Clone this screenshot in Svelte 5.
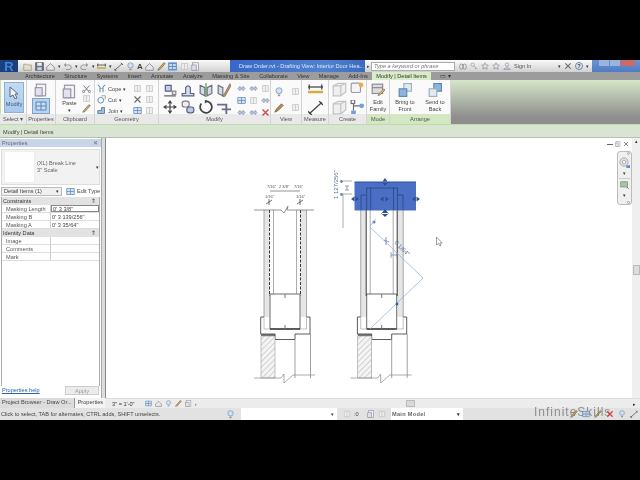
<script>
    const tabs = ["Architecture", "Structure", "Systems", "Insert", "Annotate", "Analyze", "Massing & Site", "Collaborate", "View", "Manage", "Add-Ins"];

    const constraints = [
        ["Masking Length", "0'  3 3/8\"", true],
        ["Masking B", "0'  3 139/256\"", false],
        ["Masking A", "0'  3 35/64\"", false]
    ];

    const identity = ["Image", "Comments", "Mark"];

    // small tool icons, all on a 12x12 box
    const icons = {
        box: `<rect x="1" y="2" width="10" height="8" fill="#c8d4e4" stroke="#667"/>`,
        align: `<path d="M1 11h10M2 2h5v5H2z" fill="#b8cbe4" stroke="#446"/><path d="M8 7h3v3H8z" fill="#ddd" stroke="#777"/>`,
        offset: `<path d="M1 9h3V4q2-3 4 0v5h3v2H1z" fill="#cfdcec" stroke="#446"/>`,
        mirror: `<path d="M1 2l4 2v7l-4-2zM11 2L7 4v7l4-2z" fill="#cdd9e8" stroke="#556"/><path d="M6 0v12" stroke="#2a8a3a"/>`,
        mirror2: `<path d="M1 2l4 2v7l-4-2z" fill="#cdd9e8" stroke="#556"/><path d="M11 1L6 10l-1 2 2-1 5-9z" fill="#e8b83a" stroke="#865"/>`,
        move: `<path d="M6 0l2 3H4zM6 12l2-3H4zM0 6l3-2v4zM12 6L9 4v4z" fill="#222"/><path d="M6 3v6M3 6h6" stroke="#222"/>`,
        copy: `<rect x="1" y="1" width="6" height="5" rx="2" fill="#eee" stroke="#667"/><rect x="5" y="6" width="6" height="5" rx="2" fill="#a9c3e4" stroke="#446"/>`,
        rotate: `<path d="M6 1a5 5 0 1 1-4 2" fill="none" stroke="#222" stroke-width="1.5"/><path d="M5 0l3 1-3 2z" fill="#222"/>`,
        trim: `<path d="M0 4h8v8M4 8h8" fill="none" stroke="#557" stroke-width="1.6"/>`,
        arrows: `<path d="M1 6l3-3v2h4V3l3 3-3 3V7H4v2z" fill="#a9c3e4" stroke="#557" stroke-width=".6"/>`,
        grid: `<path d="M1 2h10v8H1zM1 6h10M6 2v8" fill="#cfe0f2" stroke="#47a"/>`,
        faint: `<path d="M2 2h8v8H2zM6 2v8" fill="#eee" stroke="#bbb"/>`,
        redx: `<path d="M2 2l8 8M10 2l-8 8" stroke="#d03028" stroke-width="2"/>`,
        cross: `<path d="M2 2l8 8M10 2l-8 8" stroke="#555" stroke-width="1.6"/>`,
        page: `<rect x="2" y="1" width="8" height="10" fill="#f4f4f4" stroke="#889"/><rect x="1" y="4" width="6" height="7" fill="#dde" stroke="#889"/>`,
        save: `<rect x="1" y="1" width="10" height="10" fill="#567" stroke="#234"/><rect x="3" y="1" width="6" height="4" fill="#eee"/><rect x="3" y="7" width="6" height="4" fill="#ccd"/>`,
        folder: `<path d="M1 3h4l1 1h5v7H1z" fill="#e8e0c0" stroke="#887"/>`,
        undo: `<path d="M3 4h5a3 3 0 0 1 0 6H4" fill="none" stroke="#889" stroke-width="1.3"/><path d="M4 1L1 4l3 3z" fill="#889"/>`,
        redo: `<path d="M9 4H4a3 3 0 0 0 0 6h4" fill="none" stroke="#889" stroke-width="1.3"/><path d="M8 1l3 3-3 3z" fill="#889"/>`,
        binoc: `<ellipse cx="3.5" cy="7" rx="2.5" ry="4" fill="none" stroke="#667"/><ellipse cx="8.5" cy="7" rx="2.5" ry="4" fill="none" stroke="#667"/><path d="M5 4h2" stroke="#667"/>`,
        key: `<circle cx="4" cy="4" r="2.6" fill="none" stroke="#889"/><path d="M6 6l5 5M9 9l-1.5 1.5" stroke="#889"/>`,
        star: `<path d="M6 1l1.5 3.5 3.5.4-2.6 2.4.8 3.7L6 8.7 2.800 10.600l.8-3.700L1 4.900l3.500-.4z" fill="none" stroke="#778"/>`,
        person: `<circle cx="6" cy="4" r="2.600" fill="none" stroke="#778"/><path d="M1 11q5-5 10 0z" fill="none" stroke="#778"/>`,
        brush: `<path d="M1 11l3-1 7-8-2-1-7 8z" fill="#c9a23a" stroke="#654"/>`,
        lamp: `<circle cx="6" cy="4.5" r="3.6" fill="#cfe0f4" stroke="#68a"/><path d="M4.5 9h3v2h-3z" fill="#889"/>`,
        wheel: `<circle cx="5.500" cy="5.500" r="4.500" fill="#e4e4e4" stroke="#999"/><circle cx="5.500" cy="5.500" r="2" fill="#f4f4f4" stroke="#999"/><path d="M8 9h4v3H8z" fill="#4a7cc8"/>`,
        pencil: `<path d="M1 11l2-4 6-6 2 2-6 6z" fill="#c07830" stroke="#543"/>`,
        dim: `<path d="M0 4h12" stroke="#222"/><path d="M0 8h12" stroke="#c9a020" stroke-width="2"/><path d="M1 2v4M11 2v4" stroke="#222"/>`,
        diag: `<path d="M1 11l10-9" stroke="#222"/><path d="M0 9l3 3M9 1l3 3" stroke="#222"/>`,
        ghost: `<path d="M1 3l4-2h6v7l-4 3H1z" fill="#eee" stroke="#bbb"/><path d="M1 3h6v8M7 3l4-2" fill="none" stroke="#bbb"/>`,
        group: `<rect x="1" y="1" width="8" height="8" rx="1" fill="#f3f3f3" stroke="#889"/><circle cx="9.5" cy="2.5" r="2" fill="#e8a030"/>`,
        nodes: `<path d="M3 2v7M3 5h6" stroke="#556"/><rect x="1" y="0" width="3" height="3" fill="#fff" stroke="#556"/><circle cx="10" cy="5" r="2" fill="#5a90d0"/><rect x="1" y="9" width="4" height="3" fill="#5a90d0"/>`,
        scissors: `<path d="M2 2l7 8M10 2l-7 8" stroke="#556" stroke-width="1.2"/><circle cx="2" cy="10" r="1.5" fill="none" stroke="#556"/><circle cx="10" cy="10" r="1.5" fill="none" stroke="#556"/>`,
        cope: `<path d="M1 1l3 3v7M11 1L8 4v7" fill="none" stroke="#47a" stroke-width="1.4"/><path d="M4 6h4" stroke="#888"/>`,
        cut: `<circle cx="5" cy="7" r="3.8" fill="#fff" stroke="#47a" stroke-width="1.3"/><path d="M6 1h5v5" fill="none" stroke="#777"/>`,
        join: `<path d="M1 6h5V2h4v8H1z" fill="#8fb4dc" stroke="#357"/>`,
        house: `<path d="M1 7l5-5 5 5v4H1z" fill="#e8e8e8" stroke="#667"/>`,
        editfam: `<rect x="1" y="1" width="9" height="8" fill="#d8d8d8" stroke="#778"/><path d="M1 4h9" stroke="#778"/><path d="M6 11l1-2 4-4 1 1-4 4z" fill="#e0b040" stroke="#654" stroke-width=".6"/>`,
        tofront: `<rect x="5" y="0.500" width="6.500" height="6.500" fill="#dfe8f4" stroke="#8aa"/><rect x="1" y="5" width="6.500" height="6.500" fill="#7ea8dc" stroke="#47a"/>`,
        toback: `<rect x="5" y="0.500" width="6.500" height="6.500" fill="#7ea8dc" stroke="#47a"/><rect x="1" y="5" width="6.500" height="6.500" fill="#dfe8f4" stroke="#8aa"/>`
    };

    const modifyTop = ["align", "offset", "mirror", "mirror2"];
    const modifyBottom = ["move", "copy", "rotate", "trim"];
    const modifySmall = ["arrows", "arrows", "faint", "grid", "faint", "arrows", "arrows", "arrows", "redx"];
    const geometryIcons = ["faint", "faint", "cross", "faint", "grid", "faint"];
    const geometryRows = [["cope", "Cope"], ["cut", "Cut"], ["join", "Join"]];
    const qat = [["folder", 0], ["save", 0], ["house", 1], ["undo", 1], ["redo", 1], ["dim", 1], ["diag", 0], ["lamp", 0]];
    const qat2 = ["house", "brush", "grid", "faint", "page"];
    const viewBarIcons = ["grid", "house", "lamp", "brush", "page"];

    // left detail, the right one is the same drawing moved over
    const dashLeft = [269.5, 300.5];
</script>

{#snippet ic(name, size = 12)}
    <svg class="ic" width={size} height={size} viewBox="0 0 12 12">{@html icons[name]}</svg>
{/snippet}

{#snippet detail(dx, dark)}
    <g transform="translate({dx} 0)">
        <rect x="264" y="210" width="5.5" height="107" fill="#e6e6e6"/>
        <rect x="300.5" y="210" width="6" height="107" fill="#e6e6e6"/>
        <path d="M264 210V317M306.5 210V317M273.5 210V294M296.5 210V294" stroke="#888" fill="none" stroke-width=".7"/>
        {#each dashLeft as x}
            <path d="M{x} 210V296" stroke="#222" stroke-width=".9" stroke-dasharray={dark ? "none" : "3 1.5"}/>
        {/each}
        <path d="M270 294H300M270 294V329H300V294" fill="none" stroke="#444" stroke-width=".8"/>
        <path d="M270 329H300" stroke="#222" stroke-width="1.200"/>
        <path d="M285 294v4M285 325v4" stroke="#777"/>
        <path d="M264 317H260.7V334H275V339.5H295V334H310V317H306.5" fill="none" stroke="#333" stroke-width=".8"/>
        <path d="M264 317V329H270M306.5 317V329H300" fill="none" stroke="#999" stroke-width=".6"/>
        <rect x="261" y="336" width="14" height="42" fill="url(#hatch)" stroke="#999" stroke-width=".6"/>
        <path d="M261 335H275" stroke="#333" stroke-width="1.200"/>
        <path d="M295 340V378M310.5 334V378" stroke="#888" fill="none" stroke-width=".8"/>
        <path d="M254 378H281L284 374 284 383 293 375H315" fill="none" stroke="#888" stroke-width=".7"/>
    </g>
{/snippet}

<div class="app">
    <div class="titlebar">
        <div class="logo"><span>R</span></div>
        <div class="qat">
            {#each qat as item}
                {@render ic(item[0], 9)}
                {#if item[1]}<span class="drop">▾</span>{/if}
            {/each}
            <span class="big">A</span>
            {#each qat2 as name, i}
                <span class={i === 2 ? "on" : ""}>{@render ic(name, 9)}</span>
            {/each}
        </div>
        <div class="doc">Draw Order.rvt - Drafting View: Interior Door Hea...</div>
        <span class="more">▸</span>
        <div class="search">Type a keyword or phrase</div>
        <div class="user">
            {@render ic("binoc", 8)}
            {@render ic("key", 8)}
            {@render ic("star", 8)}
            {@render ic("star", 8)}
            {@render ic("person", 8)}
            <span class="signin">Sign In</span>
            <span class="drop push">▾</span>
            {@render ic("cross", 8)}
            <span class="help">?</span>
            <span class="drop">▾</span>
        </div>
        <div class="winbtns">
            <span class="minmax"></span>
            <span class="minmax"></span>
            <span class="close"></span>
        </div>
    </div>

    <div class="tabs">
        {#each tabs as tab}
            <span class="tab">{tab}</span>
        {/each}
        <span class="tab active">Modify | Detail Items</span>
        <span class="tabicon">▭ ▾</span>
    </div>

    <div class="ribbon">
        <section class="group" style="width:27px">
            <div class="body select">
                <div class="modifybtn">
                    <svg width="10" height="13" viewBox="0 0 10 13"><path d="M1 1v10l3-2 2 4 2-1-2-4h3z" fill="#eef4fa" stroke="#667"/></svg>
                    <span>Modify</span>
                </div>
            </div>
            <div class="gtitle">Select ▾</div>
        </section>

        <section class="group" style="width:29px">
            <div class="body col props">
                {@render ic("page", 14)}
                <span class="selected">{@render ic("grid", 12)}</span>
            </div>
            <div class="gtitle">Properties</div>
        </section>

        <section class="group" style="width:39px">
            <div class="body clip">
                <div class="paste">
                    {@render ic("page", 15)}
                    <span>Paste</span>
                    <span class="drop">▾</span>
                </div>
                <div class="col smallcol">
                    {@render ic("scissors", 9)}
                    {@render ic("faint", 9)}
                    {@render ic("brush", 9)}
                </div>
            </div>
            <div class="gtitle">Clipboard</div>
        </section>

        <section class="group" style="width:64px">
            <div class="body geom">
                <div class="col geomrows">
                    {#each geometryRows as row}
                        <div class="geomrow">{@render ic(row[0], 9)}<span>{row[1]}</span><span class="drop">▾</span></div>
                    {/each}
                </div>
                <div class="icongrid two">
                    {#each geometryIcons as name}
                        {@render ic(name, 9)}
                    {/each}
                </div>
            </div>
            <div class="gtitle">Geometry</div>
        </section>

        <section class="group" style="width:112px">
            <div class="body modify">
                <div class="modbig">
                    {#each modifyTop as name}
                        {@render ic(name, 14)}
                    {/each}
                    {#each modifyBottom as name}
                        {@render ic(name, 14)}
                    {/each}
                </div>
                <div class="modsmall">
                    {#each modifySmall as name}
                        {@render ic(name, 9)}
                    {/each}
                </div>
            </div>
            <div class="gtitle">Modify</div>
        </section>

        <section class="group" style="width:31px">
            <div class="body viewgrid">
                {@render ic("lamp", 10)}
                {@render ic("faint", 9)}
                {@render ic("pencil", 10)}
                {@render ic("faint", 9)}
            </div>
            <div class="gtitle">View</div>
        </section>

        <section class="group" style="width:27px">
            <div class="body col measure">
                {@render ic("dim", 15)}
                {@render ic("diag", 15)}
            </div>
            <div class="gtitle">Measure</div>
        </section>

        <section class="group" style="width:38px">
            <div class="body create">
                {@render ic("ghost", 15)}
                {@render ic("group", 14)}
                {@render ic("ghost", 15)}
                {@render ic("nodes", 14)}
            </div>
            <div class="gtitle">Create</div>
        </section>

        <section class="group tinted" style="width:23px">
            <div class="body bigbtn">
                {@render ic("editfam", 14)}
                <span>Edit<br />Family</span>
            </div>
            <div class="gtitle">Mode</div>
        </section>

        <section class="group tinted" style="width:61px">
            <div class="body arrange">
                <div class="bigbtn">
                    {@render ic("tofront", 14)}
                    <span>Bring to<br />Front</span>
                </div>
                <div class="bigbtn">
                    {@render ic("toback", 14)}
                    <span>Send to<br />Back</span>
                </div>
            </div>
            <div class="gtitle">Arrange</div>
        </section>

        <div class="ribbonrest"></div>
    </div>

    <div class="options">Modify | Detail Items</div>

    <div class="main">
        <aside class="panel">
            <div class="panelhead"><span>Properties</span><span>✕</span></div>
            <div class="typesel">
                <div class="preview"></div>
                <div class="typename">(XL) Break Line<br />3" Scale</div>
                <span class="drop">▾</span>
            </div>
            <div class="comborow">
                <div class="combo"><span>Detail Items (1)</span><span class="drop">▾</span></div>
                {@render ic("grid", 9)}
                <span>Edit Type</span>
            </div>
            <div class="sheet">
                <div class="sechead"><span>Constraints</span><span>⇑</span></div>
                {#each constraints as row}
                    <div class="row">
                        <span class="k">{row[0]}</span>
                        <span class="v" class:editing={row[2]}>{row[1]}</span>
                    </div>
                {/each}
                <div class="sechead"><span>Identity Data</span><span>⇑</span></div>
                {#each identity as name}
                    <div class="row">
                        <span class="k">{name}</span>
                        <span class="v"></span>
                    </div>
                {/each}
            </div>
            <div class="panelfoot">
                <span class="link">Properties help</span>
                <span class="apply">Apply</span>
            </div>
            <div class="paneltabs">
                <span>Project Browser - Draw Or...</span>
                <span class="cur">Properties</span>
            </div>
        </aside>

        <div class="viewarea">
            <div class="viewtop">
                <div class="canvas">
                    <svg class="drawing" viewBox="106 138 526 262" width="526" height="262">
                        <defs>
                            <pattern id="hatch" width="4" height="4" patternUnits="userSpaceOnUse" patternTransform="rotate(45)">
                                <rect width="4" height="4" fill="#f4f4f4"/>
                                <path d="M0 0V4" stroke="#c8c8c8" stroke-width="1.6"/>
                            </pattern>
                        </defs>

                        {@render detail(0, false)}
                        {@render detail(96.7, true)}

                        <!-- left dimensions -->
                        <path d="M270 191H300M254 210H281L284 213 288 206 287 210H314" fill="none" stroke="#666" stroke-width=".7"/>
                        <path d="M266 204l6-4M297 204l6-4M269 199v6M300 199v6" stroke="#333" stroke-width=".7"/>
                        <g class="tiny">
                            <text x="267" y="188">7/16"</text>
                            <text x="279" y="188">2 3/8"</text>
                            <text x="294" y="188">7/16"</text>
                            <text x="265" y="198">1/16"</text>
                            <text x="296" y="198">1/16"</text>
                        </g>

                        <!-- selected mask -->
                        <rect x="354.5" y="182" width="61.5" height="28.5" fill="#4a6fc4"/>
                        <path d="M354.5 182H416" stroke="#2a4fa4" stroke-width="1.2"/>
                        <path d="M361 210V195H366.7M403 210V195H397.5M366.7 210V188H397.5V210M370.7 188V210M393.5 188V210" fill="none" stroke="#2c4480" stroke-width=".8"/>

                        <!-- grips -->
                        <g fill="#2f4f90">
                            <path d="M385 178l2.500 3.500h-5zM385 186l2.500-3h-5z"/>
                            <path d="M351 199l3.500-2.500v5zM359 199l-3.500-2.500v5z"/>
                            <path d="M380 199l3.500-2.500v5zM389 199l-3.500-2.500v5z"/>
                            <path d="M412 199l3.500-2.500v5zM420 199l-3.500-2.500v5z"/>
                            <path d="M385 209l4 5h-8zM385 217l4-4h-8z"/>
                        </g>

                        <!-- dimension on the mask -->
                        <path d="M343 181H352M343 194H352M343 194V228" stroke="#8a8a8a" stroke-width=".7" fill="none"/>
                        <path d="M345 186h4M345 190h4M347 186v4" stroke="#667aa8" stroke-width=".7"/>
                        <circle cx="341.5" cy="181.5" r="1.4" fill="#6a82b8"/>
                        <circle cx="341.5" cy="194.5" r="1.4" fill="#6a82b8"/>
                        <text class="dimtext" transform="translate(338 199) rotate(-90)">1 127/256"</text>

                        <!-- diagonal break line -->
                        <path d="M370 227L423 278L370 329" fill="none" stroke="#9db0d8" stroke-width=".8"/>
                        <circle cx="374" cy="222" r="1.6" fill="#6a82b8"/>
                        <path d="M370 226l6-7" stroke="#9db0d8" stroke-width=".8"/>
                        <circle cx="397" cy="304" r="1.4" fill="#3a5cb0"/>
                        <path d="M384 240l5 2M386 237v8" stroke="#6a82b8" stroke-width=".8"/>
                        <path d="M391 255h6M391 252v6M397 252v6" stroke="#6a7a9a" stroke-width=".7"/>
                        <text class="dimtext" transform="translate(394 243) rotate(45)">0 1/64"</text>

                        <!-- pointer -->
                        <path d="M436.5 237v8l2-1.5 1.5 2.5 1-.5-1.2-2.5h2.4z" fill="#fff" stroke="#777" stroke-width=".7"/>
                    </svg>

                    <div class="winctl"><span class="dash"></span>{@render ic("page", 6)}{@render ic("cross", 6)}</div>
                    <div class="navbar">
                        <span class="nb1"></span>
                        {@render ic("wheel", 11)}
                        <span class="drop">▾</span>
                        <hr />
                        <svg width="9" height="9" viewBox="0 0 12 12"><rect x="1" y="1" width="9" height="7" fill="#a8c49a" stroke="#789"/><path d="M9 8l3 3" stroke="#556"/></svg>
                        <span class="drop">▾</span>
                        <span class="nb1 end"></span>
                    </div>
                </div>
                <div class="vscroll"><span class="up">▴</span><span class="thumb"></span></div>
            </div>
            <div class="viewbar">
                <span class="scale">3" = 1'-0"</span>
                {#each viewBarIcons as name}
                    {@render ic(name, 7)}
                {/each}
                <span class="drop">‹</span>
                <span class="hthumb"></span>
                <span class="drop right">▸</span>
            </div>
        </div>
    </div>

    <div class="status">
        <span class="hint">Click to select, TAB for alternates, CTRL adds, SHIFT unselects.</span>
        <span class="statusicon">{@render ic("lamp", 9)}</span>
        <div class="field"><span class="drop">▾</span></div>
        {@render ic("faint", 8)}
        <span class="zero">:0</span>
        {@render ic("page", 8)}
        {@render ic("faint", 8)}
        <div class="modelbox"><span>Main Model</span><span class="drop">▾</span></div>
        <div class="tray">
            <span class="wm">InfiniteSkills</span>
            {@render ic("brush", 8)}
            {@render ic("grid", 8)}
            {@render ic("brush", 8)}
            {@render ic("redx", 8)}
            {@render ic("lamp", 8)}
            {@render ic("diag", 8)}
        </div>
    </div>
</div>

<style>
:global(body) {
    margin: 0;
    background: #000;
}

.app {
    width: 640px;
    height: 360px;
    margin-top: 60px;
    display: flex;
    flex-direction: column;
    overflow: hidden;
    background: #ddd;
    font-family: "Liberation Sans", sans-serif;
    font-size: 5.6px;
    color: #444;
    filter: blur(0.4px);
}

.ic {
    flex: none;
    display: block;
    opacity: .85;
}

.drop {
    font-size: 5px;
    color: #333;
}

.col {
    display: flex;
    flex-direction: column;
}

/* title row */

.titlebar {
    height: 12px;
    display: flex;
    align-items: center;
    background: linear-gradient(#fafafa, #d0d0d0);
}

.logo {
    width: 18px;
    height: 12px;
    background: #1d3f7c;
    color: #3c86e0;
    font: bold 13px "Liberation Sans", sans-serif;
    text-align: center;
    line-height: 13px;
}

.qat {
    width: 212px;
    padding-left: 5px;
    box-sizing: border-box;
    display: flex;
    align-items: center;
    gap: 2.5px;
}

.qat .big {
    font: bold 8px "Liberation Sans", sans-serif;
}

.qat .on {
    background: #8fb6e6;
}

.doc {
    width: 135px;
    height: 12px;
    box-sizing: border-box;
    padding-left: 9px;
    line-height: 12px;
    background: linear-gradient(90deg, #3767c8, #5082d0 70%, #3a6ac0);
    color: #dfe8f6;
    white-space: nowrap;
    overflow: hidden;
}

.more {
    width: 6px;
    font-size: 5px;
    text-align: center;
}

.search {
    width: 84px;
    height: 9px;
    padding-left: 2px;
    box-sizing: border-box;
    background: #fff;
    border: 1px solid #aaa;
    line-height: 7px;
    font-style: italic;
    color: #777;
}

.user {
    flex: 1;
    display: flex;
    align-items: center;
    gap: 3px;
    padding: 0 3px 0 4px;
}

.signin {
    color: #555;
}

.push {
    margin-left: auto;
}

.help {
    width: 8px;
    height: 8px;
    border: 1px solid #68a;
    border-radius: 50%;
    box-sizing: border-box;
    text-align: center;
    line-height: 6px;
    color: #246;
    font-weight: bold;
}

.winbtns {
    width: 48px;
    height: 12px;
    display: flex;
    gap: 1px;
    padding: 0 5px 6px 7px;
    box-sizing: border-box;
    background: linear-gradient(#6a94d2, #4f7cc4);
}

.winbtns span {
    flex: 1;
    background: #9ab4dc;
}

.winbtns .close {
    flex: 1.4;
    background: #cc6a6a;
}

/* tabs */

.tabs {
    height: 8px;
    display: flex;
    align-items: center;
    gap: 9.5px;
    padding-left: 25px;
    background: #9c9c9c;
    color: #333;
    line-height: 8px;
}

.tab {
    white-space: nowrap;
}

.tab.active {
    margin-left: -5px;
    padding: 0 4px;
    background: #d8ecc8;
    color: #333;
}

/* ribbon */

.ribbon {
    height: 44px;
    display: flex;
    background: #fff;
    border-left: 1px solid #bfe0aa;
}

.group {
    flex: none;
    box-sizing: border-box;
    display: flex;
    flex-direction: column;
    border-right: 1px solid #d4d4d4;
    background: #fafafa;
}

.group:first-child {
    margin-left: -1px;
}

.body {
    height: 34px;
    box-sizing: border-box;
}

.gtitle {
    height: 10px;
    line-height: 10px;
    text-align: center;
    background: #e9e9e9;
    color: #555;
    white-space: nowrap;
}

.tinted .gtitle {
    background: #d3e8c2;
}

.select {
    padding: 2px 2px 0 3px;
    border-left: 1px solid #bfe0aa;
}

.modifybtn {
    height: 31px;
    box-sizing: border-box;
    padding-top: 3px;
    display: flex;
    flex-direction: column;
    align-items: center;
    gap: 2px;
    background: linear-gradient(#c3dbf2, #a8c8ea);
    border: 1px solid #8fb0d4;
    color: #3a5a7a;
}

.props {
    align-items: center;
    padding-top: 3px;
    gap: 1px;
}

.selected {
    padding: 1px 2px;
    background: #b8d4f0;
    border: 1px solid #7fa0c8;
}

.clip {
    display: flex;
    padding: 3px 0 0 6px;
    gap: 5px;
}

.paste {
    display: flex;
    flex-direction: column;
    align-items: center;
    gap: 1px;
    padding-top: 1px;
}

.smallcol {
    gap: 1px;
    padding-top: 1px;
}

.geom {
    display: flex;
    padding: 4px 0 0 2px;
    gap: 5px;
}

.geomrows {
    width: 31px;
    gap: 2px;
}

.geomrow {
    display: flex;
    align-items: center;
    gap: 2px;
}

.icongrid.two {
    display: grid;
    grid-template-columns: 9px 9px;
    gap: 2px 3px;
}

.modify {
    display: flex;
    padding: 3px 0 0 4px;
}

.modbig {
    width: 74px;
    display: grid;
    grid-template-columns: repeat(4, 14px);
    column-gap: 4px;
    row-gap: 2px;
}

.modsmall {
    display: grid;
    grid-template-columns: repeat(3, 9px);
    gap: 3px;
    padding-top: 1px;
}

.viewgrid {
    display: grid;
    grid-template-columns: 10px 9px;
    gap: 4px 7px;
    padding: 7px 0 0 3px;
}

.measure {
    align-items: center;
    gap: 3px;
    padding-top: 2px;
}

.create {
    display: grid;
    grid-template-columns: 15px 14px;
    gap: 3px;
    padding: 2px 0 0 3px;
}

.bigbtn {
    display: flex;
    flex-direction: column;
    align-items: center;
    padding-top: 3px;
    gap: 2px;
    text-align: center;
    line-height: 7px;
}

.arrange {
    display: flex;
    justify-content: space-around;
    padding-top: 0;
}

.ribbonrest {
    flex: 1;
    background: linear-gradient(#d6e6c8, #8e8e8e 85%);
}

.options {
    height: 14px;
    line-height: 14px;
    padding-left: 3px;
    background: #d9e4d2;
    border-top: 1px solid #bcdca8;
    border-bottom: 1px solid #bbb;
    box-sizing: border-box;
}

/* main area */

.main {
    flex: 1;
    min-height: 0;
    display: flex;
    background: #dcdcdc;
}

.panel {
    width: 102px;
    display: flex;
    flex-direction: column;
    padding-top: 1px;
    background: #fff;
    border-right: 1px solid #aaa;
    box-sizing: border-box;
}

.panelhead {
    height: 8px;
    line-height: 8px;
    display: flex;
    justify-content: space-between;
    padding: 0 3px 0 2px;
    background: #c6d6e6;
    color: #667;
}

.typesel {
    height: 36px;
    margin: 2px 1px 0;
    display: flex;
    align-items: center;
    background: #f2f2f2;
    border: 1px solid #ddd;
    box-sizing: border-box;
}

.preview {
    width: 31px;
    height: 32px;
    margin-left: 2px;
    background: #fff;
    border: 1px solid #eee;
    box-sizing: border-box;
}

.typename {
    flex: 1;
    padding-left: 2px;
    line-height: 7px;
    color: #666;
}

.comborow {
    height: 12px;
    display: flex;
    align-items: center;
    gap: 2px;
    padding-left: 1px;
}

.combo {
    width: 61px;
    height: 9px;
    padding: 0 2px;
    display: flex;
    justify-content: space-between;
    align-items: center;
    background: #f0f0f0;
    border: 1px solid #bbb;
    box-sizing: border-box;
    margin-right: 2px;
}

.sheet {
    flex: 1;
    margin: 0 1px;
    border-right: 1px solid #aaa;
    border-left: 1px solid #aaa;
}

.sechead {
    height: 8px;
    line-height: 8px;
    display: flex;
    justify-content: space-between;
    padding: 0 3px 0 1px;
    background: #e2e2e2;
    color: #333;
}

.row {
    height: 8px;
    line-height: 8px;
    display: flex;
    border-bottom: 1px solid #ddd;
    box-sizing: border-box;
}

.k {
    width: 49px;
    padding-left: 4px;
    box-sizing: border-box;
    border-right: 1px solid #ccc;
    color: #555;
}

.v {
    flex: 1;
    padding-left: 1px;
}

.editing {
    border: 1px solid #888;
    line-height: 6px;
}

.panelfoot {
    height: 12px;
    display: flex;
    justify-content: space-between;
    align-items: flex-start;
    padding: 0 2px;
}

.link {
    color: #2a60b0;
    text-decoration: underline;
    line-height: 9px;
}

.apply {
    width: 34px;
    height: 9px;
    line-height: 8px;
    text-align: center;
    background: #ececec;
    border: 1px solid #ccc;
    box-sizing: border-box;
    color: #999;
}

.paneltabs {
    height: 10px;
    display: flex;
    background: #dcdcdc;
    line-height: 9px;
    white-space: nowrap;
}

.paneltabs span {
    padding: 0 2px;
    border-right: 1px solid #999;
}

.paneltabs .cur {
    background: #f4f4f4;
    padding: 0 3px;
}

.viewarea {
    flex: 1;
    min-width: 0;
    margin-left: 3px;
    display: flex;
    flex-direction: column;
}

.viewtop {
    flex: 1;
    min-height: 0;
    display: flex;
}

.canvas {
    position: relative;
    flex: 1;
    background: #fff;
    border-left: 1px solid #888;
    box-sizing: border-box;
    overflow: hidden;
}

.drawing {
    position: absolute;
    top: 0;
    left: 0;
}

.tiny text {
    font: 4px "Liberation Sans", sans-serif;
    fill: #555;
}

.dimtext {
    font: 6px "Liberation Sans", sans-serif;
    fill: #5a6c9c;
}

.winctl {
    position: absolute;
    top: 3px;
    right: 3px;
    display: flex;
    align-items: center;
    gap: 2px;
}

.dash {
    width: 6px;
    height: 1px;
    background: #666;
}

.navbar {
    position: absolute;
    top: 13px;
    right: 0;
    width: 15px;
    height: 54px;
    box-sizing: border-box;
    display: flex;
    flex-direction: column;
    align-items: center;
    gap: 2px;
    background: #f0f0f0;
    border: 1px solid #bbb;
    border-radius: 3px;
}

.navbar hr {
    width: 11px;
    margin: 0;
    border: 0;
    border-top: 1px solid #ccc;
}

.nb1 {
    width: 3px;
    height: 3px;
    margin-left: 7px;
    border-radius: 50%;
    border: 1px solid #aaa;
    box-sizing: border-box;
}

.nb1.end {
    margin-top: auto;
}

.vscroll {
    width: 8px;
    display: flex;
    flex-direction: column;
    align-items: center;
    background: #efefef;
    color: #333;
}

.up {
    font-size: 5px;
}

.thumb {
    width: 7px;
    height: 10px;
    margin-top: 121px;
    background: #dcdcdc;
    border: 1px solid #bbb;
    box-sizing: border-box;
}

.viewbar {
    height: 10px;
    display: flex;
    align-items: center;
    gap: 3px;
    padding-left: 7px;
    background: #ececec;
    border-top: 1px solid #ddd;
    box-sizing: border-box;
}

.scale {
    width: 30px;
    color: #333;
}

.hthumb {
    width: 9px;
    height: 7px;
    margin-left: 206px;
    background: #d8d8d8;
    border: 1px solid #bbb;
    box-sizing: border-box;
}

.right {
    margin-left: auto;
    margin-right: 4px;
}

/* status row */

.status {
    height: 12px;
    display: flex;
    align-items: center;
    gap: 3px;
    background: #e2e2e2;
    white-space: nowrap;
}

.hint {
    width: 223px;
    padding-left: 1px;
    box-sizing: border-box;
    color: #444;
}

.statusicon {
    width: 12px;
}

.field {
    width: 96px;
    height: 12px;
    margin-right: 3px;
    background: #fff;
    text-align: right;
    padding-right: 3px;
    box-sizing: border-box;
    line-height: 12px;
}

.zero {
    width: 4px;
    margin-right: 6px;
}

.modelbox {
    width: 72px;
    height: 12px;
    line-height: 12px;
    margin-left: 2px;
    padding: 0 3px 0 1px;
    display: flex;
    justify-content: space-between;
    background: #fff;
    box-sizing: border-box;
    font-weight: bold;
    color: #666;
    letter-spacing: .3px;
}

.tray {
    position: relative;
    flex: 1;
    height: 12px;
    display: flex;
    align-items: center;
    justify-content: flex-end;
    gap: 4px;
    padding-right: 2px;
}

.wm {
    position: absolute;
    left: 68px;
    top: -3px;
    font: 12px/14px "Liberation Sans", sans-serif;
    letter-spacing: 1px;
    color: rgba(120, 120, 120, .8);
}
</style>
